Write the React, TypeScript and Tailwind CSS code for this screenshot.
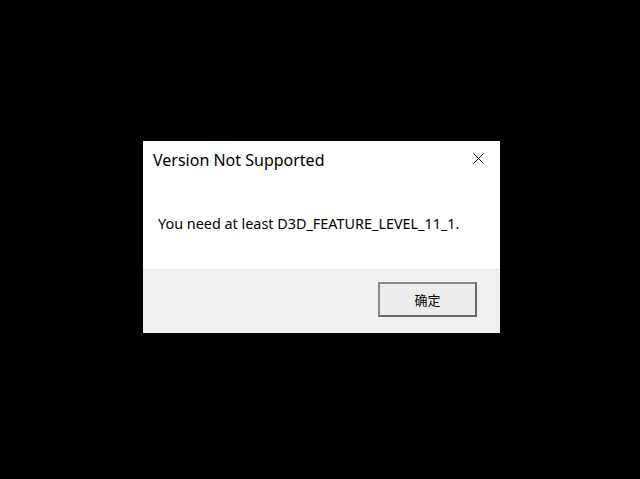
import React from "react";

export default function App() {
  return (
    <div className="w-[640px] h-[479px] bg-black pt-[141px] pl-[143px]" style={{ fontFamily: '"Noto Sans", "Noto Sans CJK SC", sans-serif' }}>
      <div className="w-[357px] h-[192px] bg-white flex flex-col">
        <div className="h-[128px] relative flex flex-col">
          <div className="pl-[10px] pt-[9px] text-[16px] leading-[20px] text-[#000]">Version Not Supported</div>
          <div className="pl-[15px] pt-[44px] text-[14.4px] leading-[20px] text-[#000]">You need at least D3D_FEATURE_LEVEL_11_1.</div>
          <svg className="absolute top-[12px] right-[16px]" width="11" height="11" viewBox="0 0 11 11">
            <path d="M0.5 0.5 L10.5 10.5 M10.5 0.5 L0.5 10.5" stroke="#000" strokeWidth="1" fill="none" />
          </svg>
        </div>
        <div className="flex-1 bg-[#f0f0f0] border-t border-[#e6e6e6] flex justify-end items-start pt-[12px] pr-[23px]">
          <button className="w-[99px] h-[35px] bg-[#ececec] border-2 border-t-[#8a8a8a] border-l-[#8a8a8a] border-r-[#6a6a6a] border-b-[#6a6a6a] flex items-center justify-center text-[13px] leading-none text-black" style={{ fontFamily: '"Noto Sans CJK SC", sans-serif' }}>
            确定
          </button>
        </div>
      </div>
    </div>
  );
}
